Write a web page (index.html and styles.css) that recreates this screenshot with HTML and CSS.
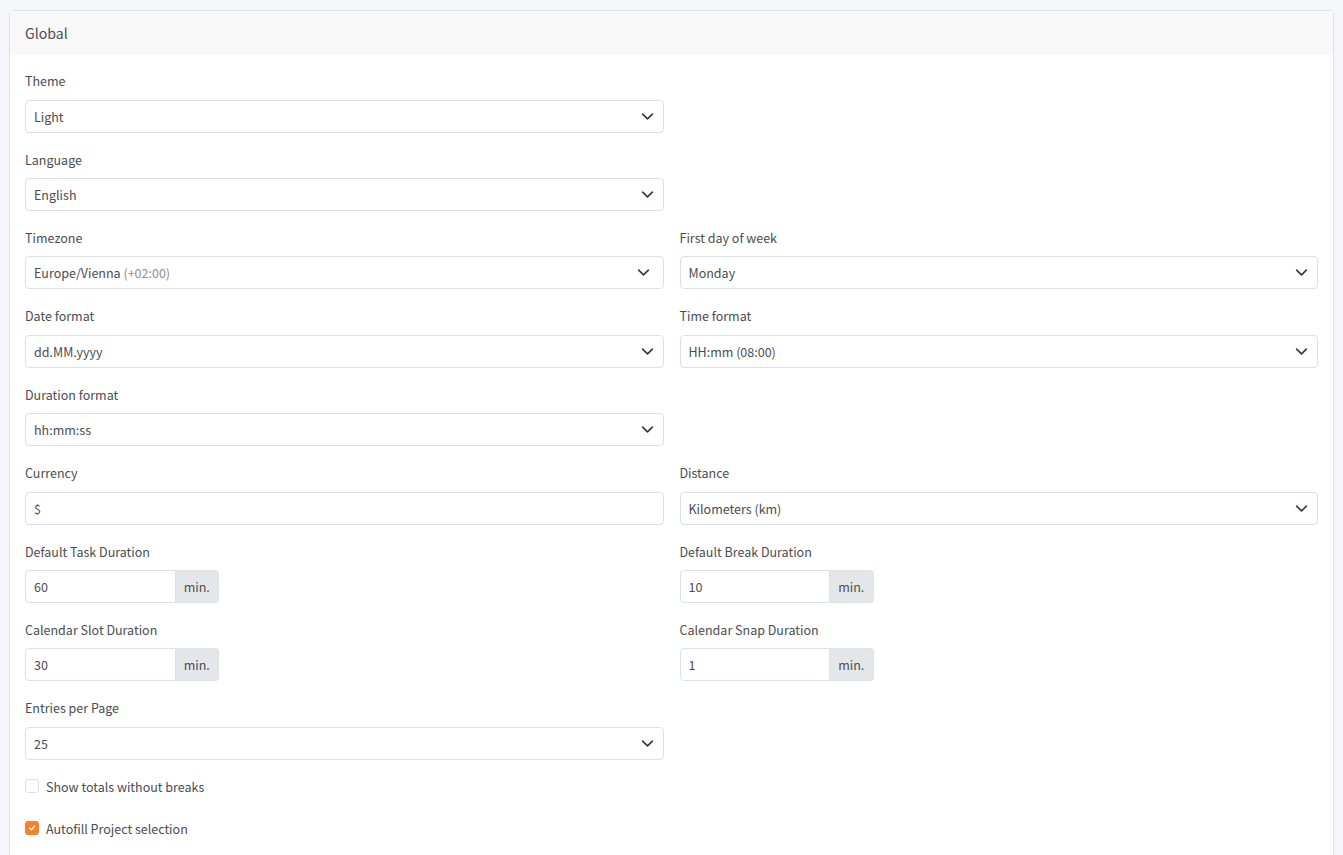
FILE: index.html
```html
<!DOCTYPE html>
<html lang="en">
<head>
    <meta charset="UTF-8">
    <meta name="viewport" content="width=device-width, initial-scale=1.0">
    <title>Settings</title>
    <link rel="stylesheet" href="styles.css">
</head>
<body>
    <div class="card">
        <div class="card-header">Global</div>
        <div class="card-body">
            <div class="form-row">
                <div class="field">
                    <label>Theme</label>
                    <div class="select-wrap">
                        <select class="form-control"><option>Light</option></select>
                        <svg class="chevron" viewBox="0 0 16 16"><path d="M2 5l6 6 6-6"/></svg>
                    </div>
                </div>
            </div>
            <div class="form-row">
                <div class="field">
                    <label>Language</label>
                    <div class="select-wrap">
                        <select class="form-control"><option>English</option></select>
                        <svg class="chevron" viewBox="0 0 16 16"><path d="M2 5l6 6 6-6"/></svg>
                    </div>
                </div>
            </div>
            <div class="form-row">
                <div class="field">
                    <label>Timezone</label>
                    <div class="select-wrap">
                        <div class="form-control picker">Europe/Vienna <span class="muted">(+02:00)</span></div>
                        <svg class="chevron chevron-picker" viewBox="0 0 16 16"><path d="M2 5l6 6 6-6"/></svg>
                    </div>
                </div>
                <div class="field">
                    <label>First day of week</label>
                    <div class="select-wrap">
                        <select class="form-control"><option>Monday</option></select>
                        <svg class="chevron" viewBox="0 0 16 16"><path d="M2 5l6 6 6-6"/></svg>
                    </div>
                </div>
            </div>
            <div class="form-row">
                <div class="field">
                    <label>Date format</label>
                    <div class="select-wrap">
                        <select class="form-control"><option>dd.MM.yyyy</option></select>
                        <svg class="chevron" viewBox="0 0 16 16"><path d="M2 5l6 6 6-6"/></svg>
                    </div>
                </div>
                <div class="field">
                    <label>Time format</label>
                    <div class="select-wrap">
                        <select class="form-control"><option>HH:mm (08:00)</option></select>
                        <svg class="chevron" viewBox="0 0 16 16"><path d="M2 5l6 6 6-6"/></svg>
                    </div>
                </div>
            </div>
            <div class="form-row">
                <div class="field">
                    <label>Duration format</label>
                    <div class="select-wrap">
                        <select class="form-control"><option>hh:mm:ss</option></select>
                        <svg class="chevron" viewBox="0 0 16 16"><path d="M2 5l6 6 6-6"/></svg>
                    </div>
                </div>
            </div>
            <div class="form-row">
                <div class="field">
                    <label>Currency</label>
                    <input class="form-control" type="text" value="$">
                </div>
                <div class="field">
                    <label>Distance</label>
                    <div class="select-wrap">
                        <select class="form-control"><option>Kilometers (km)</option></select>
                        <svg class="chevron" viewBox="0 0 16 16"><path d="M2 5l6 6 6-6"/></svg>
                    </div>
                </div>
            </div>
            <div class="form-row">
                <div class="field">
                    <label>Default Task Duration</label>
                    <div class="input-group">
                        <input class="form-control" type="text" value="60">
                        <span class="input-group-text">min.</span>
                    </div>
                </div>
                <div class="field">
                    <label>Default Break Duration</label>
                    <div class="input-group">
                        <input class="form-control" type="text" value="10">
                        <span class="input-group-text">min.</span>
                    </div>
                </div>
            </div>
            <div class="form-row">
                <div class="field">
                    <label>Calendar Slot Duration</label>
                    <div class="input-group">
                        <input class="form-control" type="text" value="30">
                        <span class="input-group-text">min.</span>
                    </div>
                </div>
                <div class="field">
                    <label>Calendar Snap Duration</label>
                    <div class="input-group">
                        <input class="form-control" type="text" value="1">
                        <span class="input-group-text">min.</span>
                    </div>
                </div>
            </div>
            <div class="form-row">
                <div class="field">
                    <label>Entries per Page</label>
                    <div class="select-wrap">
                        <select class="form-control"><option>25</option></select>
                        <svg class="chevron" viewBox="0 0 16 16"><path d="M2 5l6 6 6-6"/></svg>
                    </div>
                </div>
            </div>
            <div class="check-row">
                <span class="check"></span>
                <span>Show totals without breaks</span>
            </div>
            <div class="check-row">
                <span class="check checked">
                    <svg viewBox="0 0 20 20"><path d="M6 10l3 3 5-6"/></svg>
                </span>
                <span>Autofill Project selection</span>
            </div>
        </div>
    </div>
</body>
</html>
```

FILE: styles.css
```css
* {
    margin: 0;
    padding: 0;
    box-sizing: border-box;
}
html, body {
    height: 855px;
    overflow: hidden;
}
body {
    background-color: #f4f6fa;
    padding: 10px 9px;
    font-family: "Noto Sans CJK SC", "Liberation Sans", sans-serif;
    font-size: 12.5px;
    line-height: 21px;
    color: #4a4d51;
}
.card {
    background-color: white;
    border: 1px solid #dde3e8;
    border-radius: 4px;
    height: 900px;
}
.card-header {
    background-color: #f8f8f8;
    height: 44px;
    padding: 0 15px;
    font-size: 14.1px;
    line-height: 44px;
}
.card-body {
    padding: 15.2px 15px 0;
}
.form-row {
    display: grid;
    grid-template-columns: 1fr 1fr;
    column-gap: 16px;
    margin-bottom: 16px;
}
label {
    display: block;
    margin-bottom: 8.4px;
}
.form-control {
    display: block;
    width: 100%;
    height: 33px;
    padding: 0 8px;
    border: 1px solid #d9e2e5;
    border-radius: 4px;
    background-color: white;
    color: inherit;
    font: inherit;
    line-height: 31px;
    outline: none;
    appearance: none;
}
.select-wrap {
    position: relative;
}
.chevron {
    position: absolute;
    right: 10px;
    top: 10px;
    width: 13px;
    height: 13px;
    fill: none;
    stroke: #343a40;
    stroke-width: 2;
    stroke-linecap: round;
    stroke-linejoin: round;
}
.chevron-picker {
    right: 14px;
}
.muted {
    color: #8a8f94;
}
.input-group {
    display: flex;
    width: 194px;
}
.input-group .form-control {
    flex: 1;
    min-width: 0;
    border-radius: 4px 0 0 4px;
}
.input-group-text {
    flex: none;
    width: 43.5px;
    height: 33px;
    background-color: #e4e7ea;
    border: 1px solid #dde3e8;
    border-left: none;
    border-radius: 0 4px 4px 0;
    text-align: center;
    line-height: 31px;
}
.check-row {
    display: flex;
    align-items: center;
    gap: 7px;
    height: 21px;
    margin-bottom: 21px;
}
.check {
    flex: none;
    width: 14px;
    height: 14px;
    border: 1px solid #d9e2e5;
    border-radius: 3px;
    background-color: white;
}
.check.checked {
    background-color: #f97f2b;
    border-color: #f97f2b;
    display: flex;
}
.check svg {
    width: 12px;
    height: 12px;
    fill: none;
    stroke: white;
    stroke-width: 2.4;
    stroke-linecap: round;
    stroke-linejoin: round;
}
```
